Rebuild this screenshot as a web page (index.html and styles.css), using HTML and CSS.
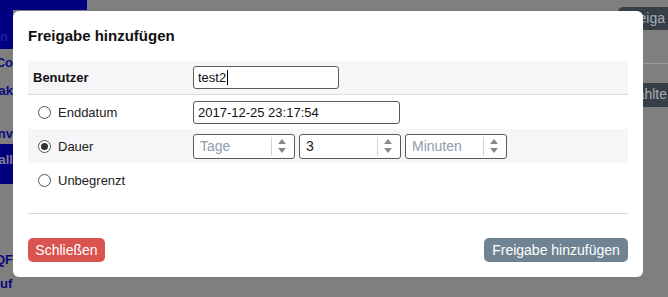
FILE: index.html
```html
<!DOCTYPE html>
<html lang="de">
<head>
<meta charset="utf-8">
<title>Freigabe hinzufügen</title>
<link rel="stylesheet" href="styles.css">
</head>
<body>
<div class="page">
  <div class="topbar"></div>
  <div class="sidebar">
    <div class="side-item active">n</div>
    <div class="side-item">Co</div>
    <div class="side-item">ak</div>
    <div class="side-item gap">nv</div>
    <div class="side-item active tall">all</div>
    <div class="side-item far">QF</div>
    <div class="side-item">uf</div>
  </div>
  <div class="rightbar">
    <div class="rb-btn">Freiga</div>
    <div class="rb-line"></div>
    <div class="rb-btn second">Gewählte</div>
  </div>
</div>

<div class="modal">
  <div class="modal-header">Freigabe hinzufügen</div>
  <div class="form">
    <div class="row shaded bordered">
      <div class="label bold">Benutzer</div>
      <div class="field"><div class="input w-user">test2<span class="caret"></span></div></div>
    </div>
    <div class="row">
      <div class="label"><span class="radio"></span>Enddatum</div>
      <div class="field"><div class="input w-date">2017-12-25 23:17:54</div></div>
    </div>
    <div class="row shaded">
      <div class="label"><span class="radio checked"></span>Dauer</div>
      <div class="field spins">
        <div class="num"><span class="num-val placeholder">Tage</span><span class="spin"><span class="up"></span><span class="down"></span></span></div>
        <div class="num"><span class="num-val">3</span><span class="spin"><span class="up"></span><span class="down"></span></span></div>
        <div class="num"><span class="num-val placeholder">Minuten</span><span class="spin"><span class="up"></span><span class="down"></span></span></div>
      </div>
    </div>
    <div class="row">
      <div class="label"><span class="radio"></span>Unbegrenzt</div>
      <div class="field"></div>
    </div>
  </div>
  <div class="divider"></div>
  <div class="footer">
    <button class="btn danger">Schließen</button>
    <button class="btn slate">Freigabe hinzufügen</button>
  </div>
</div>
</body>
</html>
```

FILE: styles.css
```css
* { box-sizing: border-box; }
html, body { margin: 0; padding: 0; }
body {
  width: 668px;
  height: 297px;
  overflow: hidden;
  background: #7f7f7f;
  font-family: "Liberation Sans", Arial, sans-serif;
  position: relative;
}
.page { position: relative; width: 668px; height: 297px; overflow: hidden; }
.topbar {
  position: absolute; left: 0; top: 0; width: 87px; height: 10px;
  background: #000080;
}
.sidebar {
  position: absolute; left: 0; top: 0; width: 13px; height: 297px;
  display: flex; flex-direction: column;
}
.side-item {
  color: #0a0a80;
  font-weight: bold;
  font-size: 13px;
  height: 28px;
  line-height: 28px;
  white-space: nowrap;
  overflow: hidden;
  direction: rtl;
  text-align: left;
}
.side-item.active { background: #000080; color: #1d1d9a; height: 50px; line-height: 26px; padding-top: 24px; }
.side-item.gap { margin-top: 16px; }
.side-item.tall { background: #00007e; color: #7f7f9a; height: 41px; line-height: 28px; padding-top: 2px; margin-top: -3px; }
.side-item.far { margin-top: 66px; height: 20px; line-height: 20px; }
.rightbar {
  position: absolute; left: 618px; top: 7px; width: 60px;
  display: flex; flex-direction: column;
}
.rb-btn {
  height: 23px; background: #363f48; color: #a9adb2;
  border-radius: 5px 0 0 5px; font-size: 14px; line-height: 23px;
  white-space: nowrap; overflow: hidden;
  direction: rtl;
  padding-right: 13px;
}
.rb-line { height: 1px; background: #9a9a9a; margin-top: 33px; margin-left: 25px; }
.rb-btn.second { margin-top: 19px; height: 24px; padding-right: 11px; }

.modal {
  position: absolute;
  left: 13px; top: 11px;
  width: 630px; height: 266px;
  background: #fff;
  border-radius: 6px;
  padding: 0 15px;
  display: flex; flex-direction: column;
  color: #222;
}
.modal-header {
  height: 50px;
  padding-top: 15px;
  font-size: 15px;
  font-weight: bold;
  line-height: 20px;
  color: #111;
}
.form { display: flex; flex-direction: column; }
.row {
  display: grid;
  grid-template-columns: 165px 1fr;
  height: 34px;
  align-items: center;
}
.row.shaded { background: #f6f6f8; }
.row.bordered { border-bottom: 1px solid #d9dce0; }
.label {
  font-size: 13px;
  color: #222;
  display: flex; align-items: center;
  padding-left: 10px;
}
.label.bold { font-weight: bold; padding-left: 5px; color: #111; }
.radio {
  width: 13px; height: 13px;
  border: 1px solid #555;
  border-radius: 50%;
  margin-right: 7px;
  display: inline-flex; align-items: center; justify-content: center;
  background: #fff;
}
.radio.checked::after {
  content: ""; width: 7px; height: 7px; border-radius: 50%; background: #333;
}
.field { display: flex; align-items: center; }
.input {
  height: 23px;
  border: 1px solid #5a5a5a;
  border-radius: 3px;
  font-size: 13px;
  line-height: 21px;
  padding-left: 4px;
  color: #111;
  background: #fff;
  display: flex; align-items: center;
}
.caret { width: 1px; height: 15px; background: #000; margin-left: 1px; }
.w-user { width: 146px; }
.w-date { width: 207px; }
.spins { gap: 4px; }
.num {
  width: 102px; height: 25px;
  border: 1px solid #5a5a5a;
  border-radius: 3px;
  display: flex; align-items: stretch;
  background: #fff;
  font-size: 14px;
}
.num-val { flex: 1; padding-left: 6px; line-height: 23px; color: #222; }
.num-val.placeholder { color: #8e9db0; }
.spin {
  width: 21px; margin: 2px 2px 2px 0;
  border-left: 1px solid #d4d4d4;
  display: flex; flex-direction: column; align-items: center; justify-content: center; gap: 4px;
}
.up, .down { width: 0; height: 0; border-left: 4px solid transparent; border-right: 4px solid transparent; }
.up { border-bottom: 5px solid #888; }
.down { border-top: 5px solid #888; }
.divider { height: 1px; background: #d7d7d7; margin-top: 16px; }
.footer {
  display: flex; justify-content: space-between; align-items: center;
  margin-top: 24px;
}
.btn {
  font-family: "Liberation Sans", Arial, sans-serif;
  font-size: 14px;
  height: 24px;
  border: none;
  border-radius: 5px;
  color: #fff;
  padding: 0 6px;
  line-height: 24px;
}
.btn.danger { background: #d9534f; width: 77px; }
.btn.slate { background: #6f8493; width: 144px; }
```
